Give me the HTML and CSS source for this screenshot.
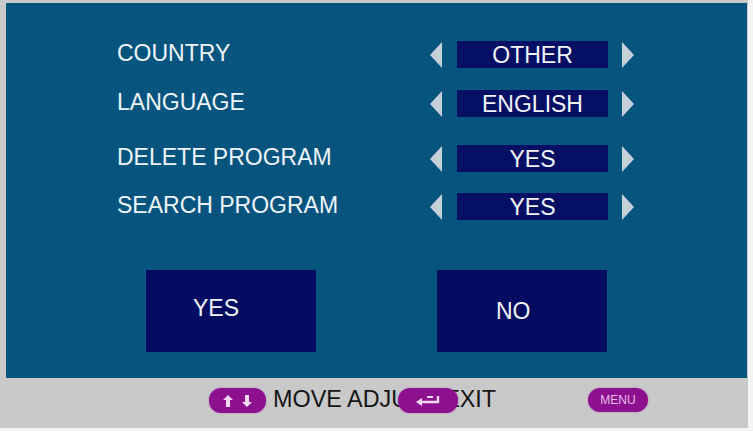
FILE: index.html
```html
<!DOCTYPE html>
<html lang="en">
<head>
<meta charset="utf-8">
<title>First Time Setup</title>
<link rel="stylesheet" href="styles.css">
</head>
<body>
<div class="screen">
  <main class="panel">
    <div class="options">
      <div class="row r1">
        <span class="label">COUNTRY</span>
        <span class="arrow left"></span>
        <span class="value">OTHER</span>
        <span class="arrow right"></span>
      </div>
      <div class="row r2">
        <span class="label">LANGUAGE</span>
        <span class="arrow left"></span>
        <span class="value">ENGLISH</span>
        <span class="arrow right"></span>
      </div>
      <div class="row r3">
        <span class="label">DELETE PROGRAM</span>
        <span class="arrow left"></span>
        <span class="value">YES</span>
        <span class="arrow right"></span>
      </div>
      <div class="row r4">
        <span class="label">SEARCH PROGRAM</span>
        <span class="arrow left"></span>
        <span class="value">YES</span>
        <span class="arrow right"></span>
      </div>
    </div>
    <div class="buttons">
      <div class="btn btn-yes">YES</div>
      <div class="btn btn-no">NO</div>
    </div>
  </main>
  <footer class="hints">
    <span class="pill pill-move">
      <svg width="36" height="14" viewBox="0 0 36 14">
        <path d="M8 1 L13 6 L10 6 L10 13 L6 13 L6 6 L3 6 Z" fill="#f0d8ef"/>
        <path d="M27 13 L22 8 L25 8 L25 1 L29 1 L29 8 L32 8 Z" fill="#f0d8ef"/>
      </svg>
    </span>
    <span class="hint-text">MOVE ADJUST EXIT</span>
    <span class="pill pill-enter">
      <svg width="40" height="14" viewBox="0 0 40 14">
        <path d="M30 2 L30 8 L14 8" fill="none" stroke="#f0d8ef" stroke-width="2.4"/>
        <path d="M8 8 L14 4 L14 12 Z" fill="#f0d8ef"/>
        <path d="M19 3 L25 3" stroke="#f0d8ef" stroke-width="2"/>
      </svg>
    </span>
    <span class="pill pill-menu">MENU</span>
  </footer>
</div>
</body>
</html>
```

FILE: styles.css
```css
html, body {
  margin: 0;
  padding: 0;
  background: #f4f4f4;
}

body {
  width: 753px;
  height: 431px;
  overflow: hidden;
  font-family: "Liberation Sans", Arial, sans-serif;
}

.screen {
  width: 748px;
  height: 428px;
  background: #c9c9c9;
  padding: 3px 0 0 6px;
  box-sizing: border-box;
  display: flex;
  flex-direction: column;
}

.panel {
  width: 741px;
  height: 375px;
  background: #07547f;
  box-sizing: border-box;
  padding: 38px 0 0 111px;
  display: flex;
  flex-direction: column;
}

.options {
  display: flex;
  flex-direction: column;
}

.row {
  display: flex;
  align-items: center;
  height: 27px;
}

.r2 { margin-top: 22px; }
.r3 { margin-top: 28px; }
.r4 { margin-top: 21px; }

.label {
  width: 313px;
  color: #eef4f8;
  font-size: 23px;
  line-height: 25px;
  align-self: flex-start;
}

.arrow {
  width: 0;
  height: 0;
  border-top: 13px solid transparent;
  border-bottom: 13px solid transparent;
}

.arrow.left {
  border-right: 12px solid #c6d0da;
  margin-right: 15px;
}

.arrow.right {
  border-left: 12px solid #c6d0da;
  margin-left: 14px;
}

.value {
  width: 151px;
  height: 27px;
  background: #050f63;
  color: #f2f4f8;
  font-size: 23px;
  line-height: 28px;
  text-align: center;
}

.buttons {
  display: flex;
  margin-top: 50px;
  margin-left: 29px;
  gap: 121px;
}

.btn {
  width: 170px;
  height: 82px;
  background: #040c62;
  color: #f0f2f8;
  font-size: 23px;
  display: flex;
  align-items: center;
  box-sizing: border-box;
}

.btn-yes {
  padding-left: 47px;
  padding-bottom: 6px;
}

.btn-no {
  padding-left: 59px;
}

.hints {
  position: relative;
  height: 50px;
  display: flex;
  align-items: flex-start;
  padding: 10px 0 0 203px;
  box-sizing: border-box;
}

.pill {
  display: inline-flex;
  align-items: center;
  justify-content: center;
  height: 25px;
  border-radius: 12px;
  background: #8d118f;
  box-shadow: 0 0 2px rgba(170, 60, 170, 0.6);
}

.pill-move {
  width: 57px;
}

.hint-text {
  margin-left: 7px;
  font-size: 23.4px;
  line-height: 22px;
  color: #151515;
}

.pill-enter {
  position: absolute;
  left: 392px;
  top: 10px;
  width: 60px;
}

.pill-menu {
  position: absolute;
  left: 582px;
  top: 10px;
  width: 60px;
  height: 24px;
  font-size: 12px;
  color: #e6bfe6;
}
```
